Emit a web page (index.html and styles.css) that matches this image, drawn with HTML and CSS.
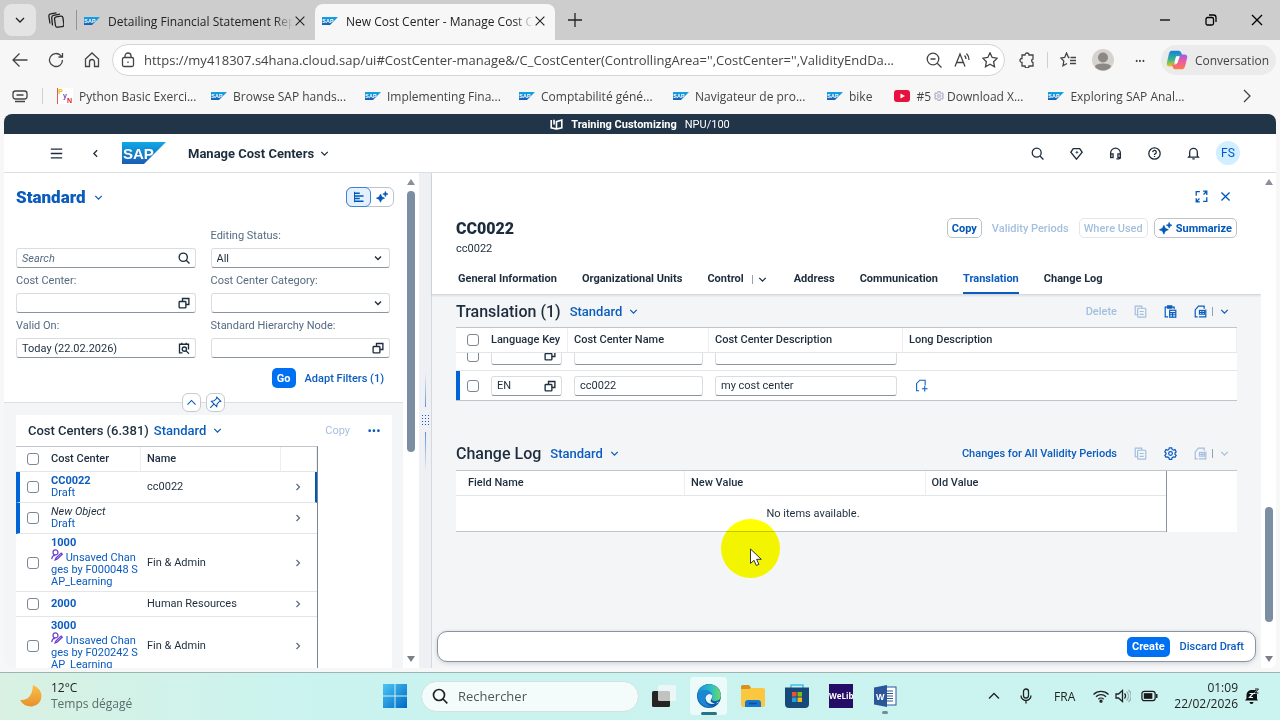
FILE: index.html
```
<!DOCTYPE html>
<html lang="en">
<head>
    <meta charset="UTF-8">
    <title>New Cost Center - Manage Cost Centers</title>
    <link rel="stylesheet" href="styles.css">
</head>
<body>
    <!-- Icon sprite -->
    <svg class="sprite" aria-hidden="true">
        <defs>
            <linearGradient id="sapBlue" x1="0" y1="0" x2="0" y2="1">
                <stop offset="0" stop-color="#0fa8e8"/>
                <stop offset="1" stop-color="#1b5cb3"/>
            </linearGradient>
            <linearGradient id="winBlue" x1="0" y1="0" x2="1" y2="1">
                <stop offset="0" stop-color="#4cc5f5"/>
                <stop offset="1" stop-color="#0069c4"/>
            </linearGradient>
            <linearGradient id="moonFill" x1="0" y1="0" x2="0" y2="1">
                <stop offset="0" stop-color="#f9c04a"/>
                <stop offset="1" stop-color="#e8912c"/>
            </linearGradient>
            <linearGradient id="edgeTop" x1="0" y1="0" x2="1" y2="0">
                <stop offset="0" stop-color="#1a8fd8"/>
                <stop offset="0.6" stop-color="#2fbfc4"/>
                <stop offset="1" stop-color="#6fdc5b"/>
            </linearGradient>
            <linearGradient id="copilotLeft" x1="0" y1="0" x2="0" y2="1">
                <stop offset="0" stop-color="#1a7fe0"/>
                <stop offset="0.55" stop-color="#35b58f"/>
                <stop offset="1" stop-color="#f2c21c"/>
            </linearGradient>
            <linearGradient id="copilotRight" x1="0" y1="0" x2="0" y2="1">
                <stop offset="0" stop-color="#a05bea"/>
                <stop offset="0.5" stop-color="#ee5c9c"/>
                <stop offset="1" stop-color="#fb7a4c"/>
            </linearGradient>
        </defs>
        <symbol id="i-down" viewBox="0 0 16 16"><path d="M4 6l4 4 4-4"/></symbol>
        <symbol id="i-up" viewBox="0 0 16 16"><path d="M3 10.500l5-5 5 5"/></symbol>
        <symbol id="i-left" viewBox="0 0 16 16"><path d="M10 4L6 8l4 4"/></symbol>
        <symbol id="i-right" viewBox="0 0 16 16"><path d="M6 4l4 4-4 4"/></symbol>
        <symbol id="i-more" viewBox="0 0 16 16"><path d="M6 2l6 6-6 6"/></symbol>
        <symbol id="i-close" viewBox="0 0 16 16"><path d="M3 3l10 10M13 3L3 13"/></symbol>
        <symbol id="i-plus" viewBox="0 0 16 16"><path d="M8 1v14M1 8h14"/></symbol>
        <symbol id="i-minimize" viewBox="0 0 16 16"><path d="M3 8h10"/></symbol>
        <symbol id="i-restore" viewBox="0 0 16 16"><rect x="3" y="5.500" width="7.500" height="7.500" rx="1.500"/><path d="M6 3h4.500Q13 3 13 5.500V10"/></symbol>
        <symbol id="i-stack" viewBox="0 0 16 16"><rect x="7" y="4.500" width="8.500" height="10.500" rx="2" transform="rotate(-8 11 10)"/><path d="M4.500 13.500L3.700 5.500Q3.700 3.700 5.500 3.300L12 2.200M2 11.500L.8 4Q.8 2.200 2.500 1.800L8.500.8"/></symbol>
        <symbol id="i-back" viewBox="0 0 16 16"><path d="M15.500 8H1M7.500 1.500L1 8l6.500 6.500"/></symbol>
        <symbol id="i-reload" viewBox="0 0 16 16"><path d="M14.500 8A6.500 6.500 0 1 1 12.600 3.400L14.500 5M14.500 1v4h-4"/></symbol>
        <symbol id="i-home" viewBox="0 0 16 16"><path d="M1.500 7L8 1l6.500 6v7.500h-4V10a2 2 0 0 0-5 0v4.500h-4z"/></symbol>
        <symbol id="i-lock" viewBox="0 0 16 16"><rect x="2.500" y="5.500" width="11" height="9" rx="1.500"/><path d="M5 5.500V4a3 3 0 0 1 6 0v1.500M8 9.500v1.500"/></symbol>
        <symbol id="i-zoomout" viewBox="0 0 16 16"><circle cx="7" cy="7" r="5.800"/><path d="M11.200 11.200L15.500 15.500M4.500 7h5"/></symbol>
        <symbol id="i-read" viewBox="0 0 16 16"><path d="M1 14.500L6 2l5 12.500M2.700 10.500h6.600M10.500 3.500q1.500 1.500 1.500 3.500M12.500 1.500Q15 4 15 8"/></symbol>
        <symbol id="i-star" viewBox="0 0 16 16"><path d="M8 .8l2.200 4.700 5 .7-3.600 3.500.9 5L8 12.300l-4.500 2.400.9-5L.8 6.200l5-.7z"/></symbol>
        <symbol id="i-puzzle" viewBox="0 0 16 16"><path d="M3 3h3a2 2 0 0 1 4 0h4v4a1.800 1.800 0 0 0 0 3.500V14h-4a2 2 0 0 1-4 0H3v-3.500a2 2 0 0 1 0-4z"/></symbol>
        <symbol id="i-favs" viewBox="0 0 16 16"><path d="M9.500 5.500H8.500L6.500 1 4.700 5.500.8 6l3 3-.8 4.800L7 11.500M10.500 5.500H16M10 8.500h6M10 11.500h6"/></symbol>
        <symbol id="i-tabs" viewBox="0 0 16 16"><rect x="1" y="3" width="14" height="8" rx="2.500"/><path d="M4.500 7h7M3 13.500h10"/></symbol>
        <symbol id="i-search" viewBox="0 0 16 16"><circle cx="7" cy="7" r="5.500"/><path d="M11 11l4.300 4.300"/></symbol>
        <symbol id="i-menu" viewBox="0 0 16 16"><path d="M1 2.500h14M1 8h14M1 13.500h14"/></symbol>
        <symbol id="i-diamond" viewBox="0 0 16 16"><path d="M4 2h8l3 4.500L8 15 1 6.500z"/><path d="M8.500 4.200l.6 1.700 1.700.6-1.700.6-.6 1.700-.6-1.700-1.700-.6 1.700-.6z" fill="currentColor" stroke="none"/></symbol>
        <symbol id="i-headset" viewBox="0 0 16 16"><path d="M2 12V7.500a6 6 0 0 1 12 0V13q0 1.500-2 1.500H9"/><rect x="2" y="8.500" width="3" height="4.500"/><rect x="11" y="8.500" width="3" height="4.500"/></symbol>
        <symbol id="i-help" viewBox="0 0 16 16"><circle cx="8" cy="8" r="7"/><path d="M5.800 6.300a2.200 2.200 0 1 1 3 2.100Q8 8.700 8 9.700M8 11v1.300"/></symbol>
        <symbol id="i-bell" viewBox="0 0 16 16"><path d="M2 12.500h12L12.700 11V6.500a4.700 4.700 0 0 0-9.400 0V11zM6.500 14.500h3"/></symbol>
        <symbol id="i-book" viewBox="0 0 16 16"><path d="M8 13.500L1.500 12V2.500M8 13.500l6.500-1.500V2.500L8 4.500zM5 2v6"/></symbol>
        <symbol id="i-chart" viewBox="0 0 16 16"><path d="M2 3h7M2 6.500h12M2 10h7M2 13.700h12" stroke-width="2"/><path d="M2 1v14"/></symbol>
        <symbol id="i-ai" viewBox="0 0 16 16"><path d="M6 4l1.700 3.800L11.500 9.500 7.700 11.200 6 15 4.300 11.200.5 9.500 4.300 7.800zM12.500.5l1 2.500 2.500 1-2.500 1-1 2.500-1-2.500-2.500-1 2.500-1z" fill="currentColor" stroke="currentColor" stroke-width=".8"/></symbol>
        <symbol id="i-help-value" viewBox="0 0 16 16"><rect x="1.500" y="6" width="9" height="8.500" rx="1"/><path d="M6 6V2h8.500v8h-4"/></symbol>
        <symbol id="i-calendar" viewBox="0 0 16 16"><path d="M6 14.500H2V3h12v7M2 3v3M5 1v3M11 1v3"/><circle cx="8.500" cy="9.500" r="2.800"/><path d="M10.500 11.500L14.500 15.500"/></symbol>
        <symbol id="i-pin" viewBox="0 0 16 16"><path d="M9.500 1.500l5 5-2 .5-2.500 2.700L9.500 13 3 6.500l3.300-.5L9 3.500zM6 10l-4.500 4.500"/></symbol>
        <symbol id="i-user-edit" viewBox="0 0 16 16"><circle cx="6" cy="4.500" r="3.300"/><path d="M1 13.500Q1.500 8.500 5.500 8.500M5.500 14.500l1-2.500L13.500 5.500l1.500 1.500L8 13.500z"/></symbol>
        <symbol id="i-expand" viewBox="0 0 16 16"><path d="M1.500 7V2H6M14.500 9v5H10M10 1.500h4.500V6M14.500 1.500L10.500 5.500M6 14.500H1.500V10M1.500 14.500l4-4"/></symbol>
        <symbol id="i-copy" viewBox="0 0 16 16"><path d="M4 12H1.500V1.500h8V4"/><rect x="4.500" y="4" width="10" height="11" rx="1"/><path d="M7 8h5M7 11.500h5"/></symbol>
        <symbol id="i-paste" viewBox="0 0 16 16"><path d="M5 14.500H1.500V2.500h11V5M4.500 1h5v3h-5z"/><rect x="7" y="6.500" width="7.500" height="8.500"/><path d="M7 9.500h7.500M7 12h7.500M10.500 9.500V15"/></symbol>
        <symbol id="i-export" viewBox="0 0 16 16"><path d="M4.500 14.500H1.500V6L5.500 1.500H12.500V4.500M6 14.500h8.500V5.500"/><path d="M6 6h7.500v6H6z" fill="currentColor" stroke="none"/><path d="M7.500 7.500h1.500v1H7.500zM10.500 7.500H12v1h-1.500zM7.500 10H9v1H7.500zM10.500 10H12v1h-1.500z" fill="#f3f5f7" stroke="none"/></symbol>
        <symbol id="i-gear" viewBox="0 0 16 16"><path d="M6.500 1h3l.5 2 1.500.9 2-.7L15 5.900l-1.500 1.400v1.500L15 10.200l-1.500 2.600-2-.6-1.500.9-.5 2h-3l-.5-2-1.500-.9-2 .6L1 10.200l1.500-1.400V7.300L1 5.900l1.500-2.700 2 .7L6 3z"/><circle cx="8" cy="8" r="2.300"/></symbol>
        <symbol id="i-note-add" viewBox="0 0 16 16"><path d="M5 14.500H2V5.500L6 1.500h6.500V8M8.500 12h7M12 8.500v7"/></symbol>
        <symbol id="i-mic" viewBox="0 0 16 16"><rect x="5.500" y="1" width="5" height="9" rx="2.500"/><path d="M3 7.500a5 5 0 0 0 10 0M8 12.500V15.500"/></symbol>
        <symbol id="i-wifi" viewBox="0 0 16 16"><path d="M.5 6.500a10.600 10.600 0 0 1 15 0M3 8.800a7 7 0 0 1 10 0M5.400 11.200a3.700 3.700 0 0 1 5.200 0"/><circle cx="8" cy="13.200" r="1" fill="currentColor"/></symbol>
        <symbol id="i-sound" viewBox="0 0 16 16"><path d="M1 6v4h2.500L7.500 13.500v-11L3.500 6zM9.500 5.500a3.500 3.500 0 0 1 0 5"/><path d="M11.500 3.500a6 6 0 0 1 0 9M13.500 2a8 8 0 0 1 0 12" opacity=".3"/></symbol>
        <symbol id="i-sap" viewBox="0 0 44 22"><path d="M0 0h44L22 22H0z" fill="url(#sapBlue)" stroke="none"/><text x="1" y="17" class="sap-text">SAP</text></symbol>
    </svg>

    <!-- Browser tabs -->
    <div class="tab-bar">
        <button class="tab-search" aria-label="Search tabs"><svg class="icon"><use href="#i-down"/></svg></button>
        <button class="plain workspaces" aria-label="Workspaces"><svg class="icon"><use href="#i-stack"/></svg></button>
        <div class="tab">
            <svg class="favicon"><use href="#i-sap"/></svg>
            <span class="tab-title">Detailing Financial Statement Repo</span>
            <button class="plain" aria-label="Close tab"><svg class="icon small"><use href="#i-close"/></svg></button>
        </div>
        <div class="tab active">
            <svg class="favicon"><use href="#i-sap"/></svg>
            <span class="tab-title">New Cost Center - Manage Cost C</span>
            <button class="plain" aria-label="Close tab"><svg class="icon small"><use href="#i-close"/></svg></button>
        </div>
        <button class="plain new-tab" aria-label="New tab"><svg class="icon"><use href="#i-plus"/></svg></button>
        <div class="window-buttons">
            <button class="plain" aria-label="Minimize"><svg class="icon"><use href="#i-minimize"/></svg></button>
            <button class="plain" aria-label="Restore"><svg class="icon"><use href="#i-restore"/></svg></button>
            <button class="plain" aria-label="Close"><svg class="icon"><use href="#i-close"/></svg></button>
        </div>
    </div>

    <!-- Address bar -->
    <div class="toolbar">
        <div class="nav-buttons">
            <button class="plain" aria-label="Back"><svg class="icon"><use href="#i-back"/></svg></button>
            <button class="plain" aria-label="Refresh"><svg class="icon"><use href="#i-reload"/></svg></button>
            <button class="plain" aria-label="Home"><svg class="icon"><use href="#i-home"/></svg></button>
        </div>
        <div class="address">
            <svg class="icon"><use href="#i-lock"/></svg>
            <input type="text" class="url" aria-label="Address" value="https://my418307.s4hana.cloud.sap/ui#CostCenter-manage&amp;/C_CostCenter(ControllingArea='',CostCenter='',ValidityEndDa...">
            <svg class="icon"><use href="#i-zoomout"/></svg>
            <svg class="icon"><use href="#i-read"/></svg>
            <svg class="icon"><use href="#i-star"/></svg>
        </div>
        <div class="browser-actions">
            <button class="plain" aria-label="Extensions"><svg class="icon"><use href="#i-puzzle"/></svg></button>
            <span class="divider"></span>
            <button class="plain" aria-label="Favorites"><svg class="icon"><use href="#i-favs"/></svg></button>
            <button class="plain" aria-label="Profile">
                <svg class="profile" viewBox="0 0 22 22"><circle cx="11" cy="11" r="11" fill="#d6d3cf"/><circle cx="11" cy="8.500" r="5" fill="#8b8886"/><path d="M3 18q0-3.500 8-3.500t8 3.500a11 11 0 0 1-16 0z" fill="#8b8886"/></svg>
            </button>
            <button class="plain dots" aria-label="More">•••</button>
        </div>
        <button class="copilot">
            <svg class="copilot-logo" viewBox="0 0 24 24"><path d="M6 2h8q2 0 3 3l1 3h-4q-2 0-3 3l-2 6q-1 2-3 2H4q-4 0-3-4l2-9Q4 2 6 2z" fill="url(#copilotLeft)"/><path d="M18 22h-8q-2 0-3-3l-.500-2H10q2 0 3-3l2-6q1-2 3-2h2q4 0 3 4l-2 8q-1 4-3 4z" fill="url(#copilotRight)"/><path d="M11 8h3.500l-2 7H9z" fill="#fff"/></svg>
            Conversation
        </button>
    </div>

    <!-- Bookmarks -->
    <div class="bookmarks">
        <svg class="icon"><use href="#i-tabs"/></svg>
        <span class="divider"></span>
        <a href="#" class="bookmark fixed">
            <svg class="python" viewBox="0 0 16 16"><path d="M0 0h16v16H0z" fill="#fff"/><path d="M.500 0v16" stroke="#e05a5a"/><text x="1" y="6" fill="#e8b800">P</text><text x="6" y="10" fill="#7a3db8">y</text><text x="10" y="15" fill="#d8232a">N</text></svg>
            Python Basic Exerci...
        </a>
        <a href="#" class="bookmark fixed"><svg class="favicon"><use href="#i-sap"/></svg>Browse SAP hands...</a>
        <a href="#" class="bookmark fixed"><svg class="favicon"><use href="#i-sap"/></svg>Implementing Fina...</a>
        <a href="#" class="bookmark fixed"><svg class="favicon"><use href="#i-sap"/></svg>Comptabilité géné...</a>
        <a href="#" class="bookmark fixed"><svg class="favicon"><use href="#i-sap"/></svg>Navigateur de pro...</a>
        <a href="#" class="bookmark"><svg class="favicon"><use href="#i-sap"/></svg>bike</a>
        <a href="#" class="bookmark fixed">
            <svg class="youtube" viewBox="0 0 16 12"><rect width="16" height="12" rx="3" fill="#e8103c"/><path d="M6.500 3.500v5L11 6z" fill="#fff"/></svg>
            #5 <svg class="cog" viewBox="0 0 16 16"><use href="#i-gear"/></svg> Download X...
        </a>
        <a href="#" class="bookmark fixed"><svg class="favicon"><use href="#i-sap"/></svg>Exploring SAP Anal...</a>
        <button class="plain more-bookmarks" aria-label="More bookmarks"><svg class="icon"><use href="#i-more"/></svg></button>
    </div>

    <!-- Application -->
    <main class="app">
        <div class="banner">
            <svg class="icon"><use href="#i-book"/></svg>
            <strong>Training Customizing</strong>
            <span>NPU/100</span>
        </div>

        <header class="shell">
            <button class="plain" aria-label="Menu"><svg class="icon"><use href="#i-menu"/></svg></button>
            <button class="plain shell-back" aria-label="Back"><svg class="icon"><use href="#i-left"/></svg></button>
            <svg class="sap-logo"><use href="#i-sap"/></svg>
            <button class="plain shell-title">Manage Cost Centers <svg class="icon"><use href="#i-down"/></svg></button>
            <div class="shell-actions">
                <button class="plain" aria-label="Search"><svg class="icon"><use href="#i-search"/></svg></button>
                <button class="plain" aria-label="Assistant"><svg class="icon"><use href="#i-diamond"/></svg></button>
                <button class="plain" aria-label="Support"><svg class="icon"><use href="#i-headset"/></svg></button>
                <button class="plain" aria-label="Help"><svg class="icon"><use href="#i-help"/></svg></button>
                <button class="plain" aria-label="Notifications"><svg class="icon"><use href="#i-bell"/></svg></button>
                <button class="avatar">FS</button>
            </div>
        </header>

        <div class="columns">
            <!-- List -->
            <section class="list-page">
                <div class="list-body">
                    <form class="filters">
                        <div class="filters-head">
                            <button type="button" class="plain variant large">Standard <svg class="icon"><use href="#i-down"/></svg></button>
                            <div class="segmented">
                                <button type="button" class="selected" aria-label="Filter bar"><svg class="icon"><use href="#i-chart"/></svg></button>
                                <button type="button" aria-label="AI filter"><svg class="icon"><use href="#i-ai"/></svg></button>
                            </div>
                        </div>
                        <div class="filter-grid">
                            <div class="field">
                                <div class="control"><input type="text" placeholder="Search" aria-label="Search"><svg class="icon"><use href="#i-search"/></svg></div>
                            </div>
                            <div class="field">
                                <label for="status">Editing Status:</label>
                                <div class="control"><select id="status"><option>All</option></select><svg class="icon"><use href="#i-down"/></svg></div>
                            </div>
                            <div class="field">
                                <label for="costCenter">Cost Center:</label>
                                <div class="control"><input type="text" id="costCenter"><svg class="icon"><use href="#i-help-value"/></svg></div>
                            </div>
                            <div class="field">
                                <label for="category">Cost Center Category:</label>
                                <div class="control"><select id="category"><option></option></select><svg class="icon"><use href="#i-down"/></svg></div>
                            </div>
                            <div class="field">
                                <label for="validOn">Valid On:</label>
                                <div class="control"><input type="text" id="validOn" value="Today (22.02.2026)"><svg class="icon"><use href="#i-calendar"/></svg></div>
                            </div>
                            <div class="field">
                                <label for="node">Standard Hierarchy Node:</label>
                                <div class="control"><input type="text" id="node"><svg class="icon"><use href="#i-help-value"/></svg></div>
                            </div>
                        </div>
                        <div class="filter-actions">
                            <button type="button" class="primary">Go</button>
                            <button type="button" class="plain link">Adapt Filters (1)</button>
                        </div>
                        <div class="header-toggles">
                            <button type="button" aria-label="Collapse header"><svg class="icon"><use href="#i-up"/></svg></button>
                            <button type="button" aria-label="Pin header"><svg class="icon"><use href="#i-pin"/></svg></button>
                        </div>
                    </form>

                    <div class="list-card">
                        <div class="list-toolbar">
                            <h2>Cost Centers (6.381)</h2>
                            <button class="plain variant">Standard <svg class="icon"><use href="#i-down"/></svg></button>
                            <button class="plain list-copy" disabled>Copy</button>
                            <button class="plain list-more" aria-label="More">•••</button>
                        </div>
                        <table class="grid cost-centers">
                            <thead>
                                <tr>
                                    <th class="check"><input type="checkbox" aria-label="Select all"></th>
                                    <th class="center">Cost Center</th>
                                    <th class="name">Name</th>
                                    <th class="nav"></th>
                                </tr>
                            </thead>
                            <tbody>
                                <tr class="draft current">
                                    <td><input type="checkbox" aria-label="Select CC0022"></td>
                                    <td><a href="#"><b>CC0022</b><br>Draft</a></td>
                                    <td>cc0022</td>
                                    <td><svg class="icon"><use href="#i-right"/></svg></td>
                                </tr>
                                <tr class="draft">
                                    <td><input type="checkbox" aria-label="Select new object"></td>
                                    <td><em>New Object</em><br><a href="#">Draft</a></td>
                                    <td></td>
                                    <td><svg class="icon"><use href="#i-right"/></svg></td>
                                </tr>
                                <tr>
                                    <td><input type="checkbox" aria-label="Select 1000"></td>
                                    <td><a href="#"><b>1000</b><br><svg class="user-edit"><use href="#i-user-edit"/></svg> Unsaved Chan<br>ges by F000048 S<br>AP_Learning</a></td>
                                    <td>Fin &amp; Admin</td>
                                    <td><svg class="icon"><use href="#i-right"/></svg></td>
                                </tr>
                                <tr class="single">
                                    <td><input type="checkbox" aria-label="Select 2000"></td>
                                    <td><a href="#"><b>2000</b></a></td>
                                    <td>Human Resources</td>
                                    <td><svg class="icon"><use href="#i-right"/></svg></td>
                                </tr>
                                <tr>
                                    <td><input type="checkbox" aria-label="Select 3000"></td>
                                    <td><a href="#"><b>3000</b><br><svg class="user-edit"><use href="#i-user-edit"/></svg> Unsaved Chan<br>ges by F020242 S<br>AP_Learning</a></td>
                                    <td>Fin &amp; Admin</td>
                                    <td><svg class="icon"><use href="#i-right"/></svg></td>
                                </tr>
                            </tbody>
                        </table>
                    </div>
                </div>
                <div class="scrollbar list-scroll"><span class="arrow up"></span><span class="thumb"></span><span class="arrow down"></span></div>
            </section>

            <div class="splitter"><span class="splitter-line top"></span><span class="grip"></span><span class="splitter-line"></span></div>

            <!-- Detail -->
            <section class="detail-page">
                <div class="detail-body">
                    <div class="detail-head">
                        <div class="page-actions">
                            <button class="plain" aria-label="Full screen"><svg class="icon"><use href="#i-expand"/></svg></button>
                            <button class="plain" aria-label="Close"><svg class="icon"><use href="#i-close"/></svg></button>
                        </div>
                        <div class="title-row">
                            <h1>CC0022</h1>
                            <div class="title-actions">
                                <button class="outlined">Copy</button>
                                <button class="plain validity" disabled>Validity Periods</button>
                                <button class="outlined" disabled>Where Used</button>
                                <button class="outlined"><svg class="icon"><use href="#i-ai"/></svg>Summarize</button>
                            </div>
                        </div>
                        <p class="subtitle">cc0022</p>
                        <nav class="anchors">
                            <a href="#">General Information</a>
                            <a href="#">Organizational Units</a>
                            <a href="#" class="with-menu">Control<span class="bar"></span><svg class="icon"><use href="#i-down"/></svg></a>
                            <a href="#">Address</a>
                            <a href="#">Communication</a>
                            <a href="#" class="selected">Translation</a>
                            <a href="#">Change Log</a>
                        </nav>
                    </div>

                    <div class="sections">
                        <div class="section-toolbar">
                            <h2>Translation (1)</h2>
                            <button class="plain variant">Standard <svg class="icon"><use href="#i-down"/></svg></button>
                            <div class="section-actions">
                                <button class="plain link" disabled>Delete</button>
                                <button class="plain" disabled aria-label="Copy"><svg class="icon"><use href="#i-copy"/></svg></button>
                                <button class="plain" aria-label="Paste"><svg class="icon"><use href="#i-paste"/></svg></button>
                                <button class="plain split" aria-label="Export"><svg class="icon"><use href="#i-export"/></svg><span class="bar"></span><svg class="icon"><use href="#i-down"/></svg></button>
                            </div>
                        </div>
                        <table class="grid translation">
                            <thead>
                                <tr>
                                    <th class="check"><input type="checkbox" aria-label="Select all"></th>
                                    <th class="language">Language Key</th>
                                    <th class="label">Cost Center Name</th>
                                    <th class="description">Cost Center Description</th>
                                    <th>Long Description</th>
                                </tr>
                            </thead>
                            <tbody>
                                <tr class="scrolled">
                                    <td><div class="clip"><input type="checkbox" aria-label="Select row"></div></td>
                                    <td><div class="clip"><div class="control"><input type="text" aria-label="Language key"><svg class="icon"><use href="#i-help-value"/></svg></div></div></td>
                                    <td><div class="clip"><div class="control"><input type="text" aria-label="Name"></div></div></td>
                                    <td><div class="clip"><div class="control"><input type="text" aria-label="Description"></div></div></td>
                                    <td></td>
                                </tr>
                                <tr class="draft">
                                    <td><input type="checkbox" aria-label="Select EN"></td>
                                    <td><div class="control"><input type="text" value="EN" aria-label="Language key"><svg class="icon"><use href="#i-help-value"/></svg></div></td>
                                    <td><div class="control"><input type="text" value="cc0022" aria-label="Name"></div></td>
                                    <td><div class="control"><input type="text" value="my cost center" aria-label="Description"></div></td>
                                    <td><button class="plain note" aria-label="Add long description"><svg class="icon"><use href="#i-note-add"/></svg></button></td>
                                </tr>
                            </tbody>
                        </table>

                        <div class="section-toolbar log-toolbar">
                            <h2>Change Log</h2>
                            <button class="plain variant">Standard <svg class="icon"><use href="#i-down"/></svg></button>
                            <div class="section-actions">
                                <button class="plain link">Changes for All Validity Periods</button>
                                <button class="plain" disabled aria-label="Copy"><svg class="icon"><use href="#i-copy"/></svg></button>
                                <button class="plain" aria-label="Settings"><svg class="icon"><use href="#i-gear"/></svg></button>
                                <button class="plain split" disabled aria-label="Export"><svg class="icon"><use href="#i-export"/></svg><span class="bar"></span><svg class="icon"><use href="#i-down"/></svg></button>
                            </div>
                        </div>
                        <div class="log-area">
                            <table class="grid change-log">
                                <thead>
                                    <tr><th>Field Name</th><th>New Value</th><th>Old Value</th></tr>
                                </thead>
                                <tbody>
                                    <tr><td colspan="3">No items available.</td></tr>
                                </tbody>
                            </table>
                        </div>
                    </div>

                    <footer class="draft-footer">
                        <button class="primary">Create</button>
                        <button class="plain link">Discard Draft</button>
                    </footer>
                </div>
                <div class="scrollbar detail-scroll"><span class="arrow up"></span><span class="thumb"></span><span class="arrow down"></span></div>
            </section>
        </div>
    </main>

    <!-- Pointer highlight -->
    <div class="pointer-spot"></div>
    <svg class="pointer" viewBox="0 0 12 19"><path d="M.500 1v14.500l3.500-3.200 2.300 5.200 2.600-1.100-2.300-5.100h4.700z" fill="#fff" stroke="#333"/></svg>

    <!-- Windows taskbar -->
    <footer class="taskbar">
        <div class="weather">
            <svg class="moon" viewBox="0 0 22 22"><path d="M13 0q8 3.500 8.500 11Q21 20 12 21.500 4 22 0 15q12 1 13-15z" fill="url(#moonFill)"/></svg>
            <div>12°C<br><span>Temps dégagé</span></div>
        </div>
        <div class="task-icons">
            <svg class="windows" viewBox="0 0 24 24"><path d="M0 0h11.500v11.500H0zM12.500 0H24v11.500H12.500zM0 12.500h11.500V24H0zM12.500 12.500H24V24H12.500z" fill="url(#winBlue)"/></svg>
            <div class="task-search"><svg class="icon"><use href="#i-search"/></svg><input type="text" placeholder="Rechercher" aria-label="Rechercher"></div>
            <svg class="task" viewBox="0 0 24 24"><rect x="0" y="7" width="18" height="16" rx="1.500" fill="#252423"/><rect x="6" y="1" width="18" height="16" rx="1.500" fill="#f7f7f7" opacity=".75"/></svg>
            <span class="task-tile">
                <svg class="task" viewBox="0 0 24 24"><circle cx="12" cy="12" r="12" fill="#0d5ca8"/><path d="M.500 9A12 12 0 0 1 24 11q0 5.500-5.500 6-4 0-4-2 1.500-1.500 1-3.500-1-3.500-6-4Q4 7 .500 9z" fill="url(#edgeTop)"/><path d="M1 9q3-3.500 8-3 6 1 6.500 6-.500-2-3.500-2-4 .500-4 5 .500 6 7 7.800Q5 24 1.500 16 0 12 1 9z" fill="#1b87d4"/><path d="M15.500 11.500q-1-1.500-3.500-1.500-3.500 1-3.500 4.500 1 5 6.500 5.500 4 0 6.500-2.500.500.500 0 1-3.500 1.500-5.500.500-4-1-1.500-4.500 1-1.500 1-3z" fill="#eafafa"/></svg>
            </span>
            <svg class="task" viewBox="0 0 24 24"><path d="M0 3q0-2 2-2h6l2 3h12q2 0 2 2v15q0 2-2 2H2q-2 0-2-2z" fill="#f9c740"/><path d="M0 3q0-2 2-2h6l2 3-2 1H0z" fill="#d6921c"/><path d="M4 23v-4q0-3 3-3h10q3 0 3 3v4z" fill="#1577cf"/><path d="M8 19.500h8" stroke="#0b4f95" stroke-width="1.500"/></svg>
            <svg class="task" viewBox="0 0 24 24"><path d="M6 4V1h12v3" fill="none" stroke="#41bdec" stroke-width="1.500"/><path d="M0 3.500h24V20q0 4-4 4H4q-4 0-4-4z" fill="#174a78"/><path d="M7 8h4.500v4.500H7z" fill="#f0502a"/><path d="M12.500 8H17v4.500h-4.500z" fill="#80bb18"/><path d="M7 13.500h4.500V18H7z" fill="#18a3ea"/><path d="M12.500 13.500H17V18h-4.500z" fill="#fab818"/></svg>
            <span class="welib">WeLib</span>
            <span class="word-task">
                <svg viewBox="0 0 24 24"><rect x="11" y="3" width="12" height="18" fill="#fff" stroke="#2b579a"/><path d="M14 7h6M14 9.500h6M14 12h6M14 14.500h6M14 17h6" stroke="#2b579a"/><path d="M1 3.500L14 1v22L1 20.500z" fill="#2b579a"/><text x="3" y="16" class="word-letter">W</text></svg>
            </span>
        </div>
        <div class="tray">
            <svg class="icon"><use href="#i-up"/></svg>
            <svg class="icon mic"><use href="#i-mic"/></svg>
            <span class="lang">FRA</span>
            <svg class="icon"><use href="#i-wifi"/></svg>
            <svg class="icon"><use href="#i-sound"/></svg>
            <svg class="battery" viewBox="0 0 18 12"><rect x="1" y="1" width="14" height="10" rx="2.500" fill="none" stroke="#1a1a1a" stroke-width="1.300"/><rect x="3" y="3" width="9" height="6" fill="#1a1a1a"/><path d="M16.700 4v4" stroke="#1a1a1a" stroke-width="1.500"/></svg>
            <div class="clock">01:09<br>22/02/2026</div>
            <svg class="quiet" viewBox="0 0 16 16"><path d="M1 12.500l1.500-2V7a5 5 0 0 1 5-5H13v9l1 1.500zM5.500 14h4a2 2 0 0 1-4 0z" fill="#111"/><path d="M5.500 5.500h3.500l-3.500 4H9M10.500 1h4l-4 4.500h4" fill="none" stroke="#dff" stroke-width="1.200"/><path d="M11 1h3.500L11 5h3.500" fill="none" stroke="#111"/></svg>
        </div>
    </footer>
</body>
</html>
```
FILE: styles.css
```
/* Base */
* {
    box-sizing: border-box;
}

body {
    margin: 0;
    height: 100vh;
    display: flex;
    flex-direction: column;
    overflow: hidden;
    background: #f7f7f7;
    color: #1d2d3e;
    font-family: "Open Sans", "Noto Sans", sans-serif;
    font-size: 12px;
}

button,
input,
select {
    font: inherit;
    color: inherit;
    margin: 0;
}

button {
    cursor: pointer;
}

a {
    color: inherit;
    text-decoration: none;
}

h1,
h2,
p {
    margin: 0;
}

.sprite {
    position: absolute;
    width: 0;
    height: 0;
}

.icon {
    width: 16px;
    height: 16px;
    flex: none;
    fill: none;
    stroke: currentColor;
    stroke-width: 1.3;
}

.plain {
    display: flex;
    align-items: center;
    justify-content: center;
    padding: 0;
    border: 0;
    background: none;
    white-space: nowrap;
}

.sap-text {
    font: bold 15px "Liberation Sans", sans-serif;
    fill: #fff;
    stroke: none;
}

.favicon {
    width: 16px;
    height: 8px;
    flex: none;
}

.divider {
    width: 1px;
    height: 16px;
    background: #d0d0d0;
}

/* Browser tabs */
.tab-bar {
    display: flex;
    height: 40px;
    flex: none;
    align-items: center;
    background: #cdcdcd;
    color: #222;
}

.tab-search {
    display: flex;
    align-items: center;
    justify-content: center;
    width: 32px;
    height: 32px;
    margin-left: 4px;
    padding: 0;
    border: 0;
    border-radius: 8px;
    background: #e4e4e4;
}

.workspaces {
    width: 41px;
    height: 20px;
    border-right: 1px solid #8f9699;
}

.tab {
    display: flex;
    align-items: center;
    width: 238px;
    height: 36px;
    align-self: flex-end;
    padding: 0 8px 2px 7px;
}

.tab.active {
    width: 240px;
    border-radius: 8px 8px 0 0;
    background: #f7f7f7;
}

.tab-title {
    flex: 1;
    margin-left: 8px;
    overflow: hidden;
    white-space: nowrap;
    mask-image: linear-gradient(to right, #000 90%, transparent);
}

.icon.small {
    width: 14px;
    height: 14px;
}

.new-tab {
    width: 40px;
}

.window-buttons {
    display: flex;
    gap: 30px;
    margin-left: auto;
    padding-right: 15px;
    color: #000;
}

/* Address bar */
.toolbar {
    display: flex;
    flex: none;
    align-items: center;
    height: 40px;
    padding: 0 4px 0 12px;
    color: #444;
}

.nav-buttons {
    display: flex;
    gap: 20px;
}

.address {
    display: flex;
    flex: 1;
    align-items: center;
    gap: 12px;
    height: 32px;
    margin-left: 12px;
    padding: 0 6px 0 7px;
    border: 1px solid #d4d4d4;
    border-radius: 16px;
    background: #fff;
}

.url {
    flex: 1;
    min-width: 0;
    margin-left: -4px;
    padding: 0;
    border: 0;
    background: none;
    font-size: 13px;
    outline: none;
}

.browser-actions {
    display: flex;
    align-items: center;
    gap: 12px;
    margin: 0 11px 0 14px;
}

.profile {
    width: 22px;
    height: 22px;
    margin: 0 4px;
}

.dots {
    font-size: 9px;
    width: 20px;
}

.copilot {
    display: flex;
    align-items: center;
    gap: 7px;
    height: 30px;
    padding: 0 7px 0 5px;
    border: 0;
    border-radius: 15px;
    background: #ebebeb;
}

.copilot-logo {
    width: 22px;
    height: 22px;
}

/* Bookmarks */
.bookmarks {
    display: flex;
    flex: none;
    align-items: center;
    gap: 22px;
    height: 34px;
    padding: 0 26px 2px 12px;
    color: #444;
}

.bookmarks .divider {
    margin: 0 -8px 0 -8px;
}

.bookmark {
    display: flex;
    align-items: center;
    gap: 6px;
    white-space: nowrap;
}

.bookmark.fixed {
    width: 132px;
}

.python {
    flex: none;
    width: 16px;
    height: 16px;
    font: bold 7px "Liberation Sans", sans-serif;
}

.youtube {
    flex: none;
    width: 16px;
    height: 12px;
}

.cog {
    flex: none;
    width: 10px;
    height: 10px;
    margin: 0 -3px;
    fill: none;
    stroke: #b9b6cb;
    stroke-width: 2;
}

.more-bookmarks {
    margin-left: auto;
}

/* Application frame */
.app {
    display: flex;
    flex: 1;
    flex-direction: column;
    min-height: 0;
    margin: 0 4px;
    overflow: hidden;
    border-radius: 8px;
    background: #fff;
    font-family: Roboto, "Noto Sans", sans-serif;
    font-size: 11px;
}

.banner {
    display: flex;
    flex: none;
    align-items: center;
    justify-content: center;
    gap: 8px;
    height: 20px;
    background: #223548;
    color: #fff;
}

.banner .icon {
    width: 13px;
    height: 13px;
    stroke-width: 2;
}

.shell {
    display: flex;
    flex: none;
    align-items: center;
    height: 39px;
    padding: 0 36px 0 44px;
    border-bottom: 1px solid #dcdfe2;
}

.shell .icon {
    width: 13px;
    height: 13px;
    stroke-width: 1.6;
}

.shell > .plain:first-child {
    width: 16px;
}

.shell-back {
    margin: 0 20px 0 25px;
}

.sap-logo {
    width: 44px;
    height: 22px;
    margin-right: 22px;
}

.shell-title {
    gap: 4px;
    font-size: 13px;
    font-weight: 700;
}

.shell-actions {
    display: flex;
    align-items: center;
    gap: 26px;
    margin-left: auto;
}

.avatar {
    width: 24px;
    height: 24px;
    margin-left: -10px;
    padding: 0;
    border: 0;
    border-radius: 50%;
    background: #d1efff;
    color: #0057d2;
    font-size: 12px;
}

.columns {
    display: flex;
    flex: 1;
    min-height: 0;
}

/* Shared controls */
.control {
    display: flex;
    align-items: center;
    height: 20px;
    padding: 0 5px;
    border: 1px solid #d9dde1;
    border-bottom-color: #8a949e;
    border-radius: 3px;
    background: #fff;
}

.control input,
.control select {
    flex: 1;
    width: 100%;
    min-width: 0;
    height: 16px;
    padding: 0;
    border: 0;
    background: none;
    outline: none;
    appearance: none;
}

.control input::placeholder {
    color: #556b82;
    font-style: italic;
}

.control .icon {
    width: 12px;
    height: 12px;
    stroke-width: 1.8;
}

input[type="checkbox"] {
    display: block;
    width: 12px;
    height: 12px;
    margin: 0 auto;
    border: 1px solid #7b8794;
    border-radius: 3px;
    background: #fff;
    appearance: none;
}

.primary {
    height: 20px;
    padding: 0 5px;
    border: 0;
    border-radius: 5px;
    background: #0070f2;
    color: #fff;
    font-weight: 700;
}

.outlined {
    display: flex;
    align-items: center;
    gap: 4px;
    height: 20px;
    padding: 0 4px;
    border: 1px solid #bcc3ca;
    border-radius: 5px;
    background: #fff;
    color: #0057b8;
    font-weight: 700;
}

.outlined:disabled {
    font-weight: 500;
}

.outlined .icon {
    width: 13px;
    height: 13px;
}

button:disabled {
    border-color: #e3e7ea;
    color: #a3bfdf;
}

.link {
    color: #0b5cbf;
    font-weight: 500;
}

.link:disabled {
    color: #a3bfdf;
}

.variant {
    gap: 5px;
    color: #0b5cbf;
    font-size: 13px;
    font-weight: 500;
}

.variant .icon {
    width: 13px;
    height: 13px;
    stroke-width: 1.6;
}

.variant.large {
    gap: 6px;
    font-size: 17px;
    font-weight: 900;
}

.grid {
    border-collapse: separate;
    border-spacing: 0;
    table-layout: fixed;
    line-height: 12px;
    background: #fff;
}

.grid th,
.grid td {
    padding: 0 6px;
    border-bottom: 1px solid #e3e6e8;
    text-align: left;
}

.grid th {
    height: 25px;
    border-right: 1px solid #eceeef;
    font-weight: 500;
    white-space: nowrap;
}

.grid .check {
    width: 29px;
    border-right: 0;
}

.grid th:first-child,
.grid td:first-child {
    padding-left: 10px;
}

.grid .draft td:first-child {
    border-left: 4px solid #0064d9;
    padding-left: 6px;
}

.grid a {
    color: #0b5cbf;
}

/* Scrollbars */
.scrollbar {
    display: flex;
    flex: none;
    flex-direction: column;
    align-items: center;
    width: 15px;
    padding: 6px 0;
    background: #fff;
}

.thumb {
    width: 8px;
    border-radius: 4px;
    background: #7b8ea2;
}

.arrow {
    border: 4px solid transparent;
}

.arrow.up {
    border-top: 0;
    border-bottom: 6px solid #8a8f9a;
}

.arrow.down {
    margin-top: auto;
    border-bottom: 0;
    border-top: 6px solid #7a7f8a;
}

.list-scroll {
    width: 16px;
}

.list-scroll .thumb {
    height: 261px;
    margin-top: 6px;
}

.detail-scroll .thumb {
    height: 115px;
    margin-top: auto;
}

.detail-scroll .arrow.down {
    margin-top: 34px;
}

/* List page */
.list-page {
    display: flex;
    width: 415px;
    flex: none;
    background: #f3f5f7;
}

.list-body {
    flex: 1;
    min-width: 0;
    overflow: hidden;
}

.filters {
    position: relative;
    padding: 14px 9px 14px 12px;
    border-bottom: 1px solid #dcdfe2;
    background: #fff;
    color: #1d2d3e;
}

.filters-head {
    display: flex;
    align-items: center;
    justify-content: space-between;
    height: 20px;
    margin-bottom: 21px;
}

.segmented {
    display: flex;
    border: 1px solid #bcc3ca;
    border-radius: 6px;
    color: #0057b8;
}

.segmented button {
    display: flex;
    align-items: center;
    justify-content: center;
    width: 23px;
    height: 18px;
    padding: 0;
    border: 0;
    background: none;
}

.segmented .selected {
    border-radius: 5px;
    background: #e3f1ff;
    outline: 1px solid #3c83d6;
}

.segmented .icon {
    width: 12px;
    height: 12px;
}

.filter-grid {
    display: grid;
    grid-template-columns: 1fr 1fr;
    gap: 5px 15px;
    margin-right: 4px;
}

.field {
    display: flex;
    flex-direction: column;
    justify-content: flex-end;
    gap: 4px;
}

.field label {
    line-height: 16px;
    color: #556b82;
}

.filter-actions {
    display: flex;
    align-items: center;
    justify-content: flex-end;
    gap: 9px;
    margin-top: 10px;
    padding-right: 10px;
}

.header-toggles {
    position: absolute;
    bottom: -10px;
    left: 178px;
    display: flex;
    gap: 5px;
}

.header-toggles button {
    display: flex;
    align-items: center;
    justify-content: center;
    width: 19px;
    height: 19px;
    padding: 0;
    border: 1px solid #c5cbd1;
    border-radius: 6px;
    background: #fff;
    color: #0057b8;
}

.header-toggles .icon {
    width: 13px;
    height: 13px;
}

.list-card {
    margin: 12px 11px 0 12px;
    background: #fff;
}

.list-toolbar {
    display: flex;
    align-items: center;
    gap: 9px;
    height: 31px;
    padding: 0 6px 0 12px;
}

.list-toolbar h2 {
    font-size: 13px;
    font-weight: 500;
}

.list-toolbar .variant {
    margin-left: -4px;
}

.list-copy {
    margin-left: auto;
}

.list-more {
    width: 24px;
    margin-left: 3px;
    color: #0b5cbf;
    font-size: 13px;
}

.cost-centers {
    width: 302px;
    border-right: 1px solid #7b8794;
}

.list-card .grid {
    border-top: 1px solid #bfc5ca;
}

.cost-centers .center {
    width: 96px;
}

.cost-centers .name {
    width: 140px;
}

.cost-centers .nav {
    width: 36px;
}

.cost-centers td {
    padding-top: 3px;
    padding-bottom: 3px;
    white-space: nowrap;
}

.cost-centers td:last-child {
    padding-left: 11px;
    color: #556b82;
}

.cost-centers td .icon {
    display: block;
    width: 12px;
    height: 12px;
    stroke-width: 1.6;
}

.cost-centers .single td {
    height: 25px;
}

.cost-centers .current td:last-child {
    border-right: 2px solid #0057b8;
}

.user-edit {
    width: 12px;
    height: 12px;
    fill: none;
    stroke: #6b3fd0;
    stroke-width: 1.7;
}

/* Splitter */
.splitter {
    display: flex;
    flex: none;
    flex-direction: column;
    align-items: center;
    width: 13px;
    padding-top: 200px;
    border-right: 1px solid #d5d9dd;
    background: #eef0f3;
}

.splitter-line {
    width: 1px;
    height: 40px;
    background: linear-gradient(#5b93d6, #eef0f3);
}

.splitter-line.top {
    height: 34px;
    background: linear-gradient(#eef0f3, #5b93d6);
}

.grip {
    width: 9px;
    height: 12px;
    margin: 7px 0 6px;
    background: radial-gradient(circle, #0b5cbf 1px, transparent 1px) 0 0 / 3px 3px;
}

/* Detail page */
.detail-page {
    display: flex;
    flex: 1;
    min-width: 0;
}

.detail-body {
    display: flex;
    flex: 1;
    flex-direction: column;
    min-width: 0;
    background: #f3f5f7;
}

.detail-head {
    flex: none;
    padding: 13px 24px 0;
    border-bottom: 1px solid #d5d9dd;
    background: #fff;
    box-shadow: 0 1px 2px rgba(34, 53, 72, 0.1);
}

.page-actions {
    display: flex;
    justify-content: flex-end;
    gap: 11px;
    height: 20px;
    padding-right: 5px;
    color: #0057b8;
}

.page-actions .icon {
    width: 13px;
    height: 13px;
    stroke-width: 1.6;
}

.title-row {
    display: flex;
    align-items: center;
    justify-content: space-between;
    height: 20px;
    margin-top: 12px;
}

.title-row h1 {
    font-size: 16px;
    font-weight: 900;
}

.title-actions {
    display: flex;
    align-items: center;
    gap: 6px;
}

.validity {
    margin: 0 4px;
    font-weight: 500;
}

.subtitle {
    margin-top: 3px;
    line-height: 16px;
}

.anchors {
    display: flex;
    gap: 25px;
    margin-top: 8px;
    padding-left: 2px;
    font-weight: 700;
    line-height: 28px;
    white-space: nowrap;
}

.anchors a {
    height: 29px;
}

.anchors .selected {
    color: #0b5cbf;
    border-bottom: 2px solid #0b5cbf;
}

.anchors .with-menu {
    display: flex;
    align-items: center;
    gap: 3px;
    height: 28px;
}

.anchors .icon {
    width: 13px;
    height: 13px;
    stroke-width: 1.6;
}

.bar {
    width: 1px;
    height: 9px;
    background: #8fa3b7;
}

.with-menu .bar {
    margin-left: 5px;
}

.sections {
    flex: 1;
    min-height: 0;
    padding: 0 24px;
}

.section-toolbar {
    display: flex;
    align-items: center;
    gap: 9px;
    height: 32px;
}

.section-toolbar h2 {
    font-size: 16px;
    font-weight: 500;
}

.section-actions {
    display: flex;
    align-items: center;
    gap: 17px;
    margin-left: auto;
    padding-right: 6px;
}

.section-actions .plain {
    color: #0b5cbf;
}

.section-actions .plain:disabled {
    color: #a3bfdf;
}

.section-actions .icon {
    width: 13px;
    height: 13px;
    stroke-width: 1.5;
}

.split {
    gap: 5px;
}

.translation {
    width: 100%;
    border-top: 1px solid #bfc5ca;
    border-bottom: 1px solid #bfc5ca;
}

.translation .language {
    width: 83px;
}

.translation .label {
    width: 141px;
}

.translation .description {
    width: 194px;
}

.translation .draft td {
    height: 29px;
    border-bottom: 0;
}

.clip {
    display: flex;
    align-items: flex-end;
    height: 12px;
    margin-bottom: 5px;
    overflow: hidden;
}

.clip .control {
    flex: 1;
}

.clip input[type="checkbox"] {
    margin-bottom: 3px;
    flex: none;
}

.note {
    margin-left: 6px;
    color: #0b5cbf;
}

.note .icon {
    width: 13px;
    height: 13px;
}

.log-toolbar {
    margin-top: 35px;
    height: 34px;
}

.log-area {
    padding-right: 70px;
    border-top: 1px solid #bfc5ca;
    background: #fff;
}

.change-log {
    width: 100%;
    border-right: 1px solid #8a949e;
}

.grid.change-log th:first-child {
    padding-left: 12px;
}

.change-log th:first-child {
    width: 229px;
}

.change-log th:last-child {
    border-right: 0;
}

.grid.change-log td {
    height: 36px;
    border-bottom-color: #bfc5ca;
    text-align: center;
}

.draft-footer {
    display: flex;
    flex: none;
    align-items: center;
    justify-content: flex-end;
    gap: 10px;
    height: 31px;
    margin: 0 5px 6px;
    padding: 0 11px;
    border: 1px solid #8a949e;
    border-radius: 10px;
    background: #fff;
    box-shadow: 0 1px 4px rgba(34, 53, 72, 0.2);
}

/* Pointer highlight */
.pointer-spot {
    position: absolute;
    left: 721px;
    top: 519px;
    width: 59px;
    height: 59px;
    border-radius: 50%;
    background: #ffff00;
    mix-blend-mode: multiply;
}

.pointer {
    position: absolute;
    left: 750px;
    top: 548px;
    width: 12px;
    height: 19px;
}

/* Taskbar */
.taskbar {
    display: grid;
    flex: none;
    grid-template-columns: 1fr auto 1fr;
    align-items: center;
    height: 48px;
    margin-top: 4px;
    padding-bottom: 1px;
    border-top: 1px solid #9eb3b3;
    background: linear-gradient(to right, #d8f1e2, #caf3f0 25%, #cbf4f0);
    color: #222;
}

.weather {
    display: flex;
    align-items: center;
    gap: 9px;
    padding-left: 20px;
    line-height: 16px;
}

.weather span {
    color: #5a6b6b;
}

.moon {
    width: 22px;
    height: 22px;
}

.task-icons {
    display: flex;
    align-items: center;
}

.windows {
    width: 24px;
    height: 24px;
}

.task-search {
    display: flex;
    align-items: center;
    gap: 10px;
    width: 218px;
    height: 31px;
    margin: 0 3px 0 14px;
    padding: 0 10px;
    border: 1px solid #d0e2e2;
    border-radius: 16px;
    background: #f3fcfb;
}

.task-search .icon {
    stroke-width: 1.7;
}

.task-search input {
    flex: 1;
    min-width: 0;
    padding: 0;
    border: 0;
    background: none;
    font-size: 13px;
    outline: none;
}

.task-search input::placeholder {
    color: #555;
}

.task {
    width: 24px;
    height: 24px;
    flex: none;
    margin: 0 10px;
}

.task-tile {
    position: relative;
    display: flex;
    align-items: center;
    justify-content: center;
    width: 37px;
    height: 38px;
    margin: 0 4px;
    border-radius: 4px;
    background: #ebfbfa;
}

.task-tile::after {
    content: "";
    position: absolute;
    bottom: 0;
    width: 16px;
    height: 3px;
    border-radius: 2px;
    background: #267580;
}

.welib {
    width: 24px;
    height: 24px;
    margin: 0 10px;
    background: #250c66;
    color: #fff;
    font-size: 8px;
    font-weight: 700;
    line-height: 24px;
    text-align: center;
}

.word-task {
    position: relative;
    width: 24px;
    height: 24px;
    margin-left: 10px;
}

.word-task::after {
    content: "";
    position: absolute;
    bottom: -6px;
    left: 9px;
    width: 6px;
    height: 3px;
    border-radius: 2px;
    background: #6f8f90;
}

.word-letter {
    font: bold 9px "Liberation Sans", sans-serif;
    fill: #fff;
}

.tray {
    display: flex;
    align-items: center;
    justify-content: flex-end;
    gap: 6px;
    padding-right: 20px;
}

.tray .mic {
    margin: 0 14px 0 10px;
}

.lang {
    margin-right: 12px;
}

.battery {
    width: 17px;
    height: 12px;
    margin-left: 4px;
}

.clock {
    margin-left: 10px;
    line-height: 16px;
    text-align: right;
}

.quiet {
    width: 16px;
    height: 16px;
}
```
